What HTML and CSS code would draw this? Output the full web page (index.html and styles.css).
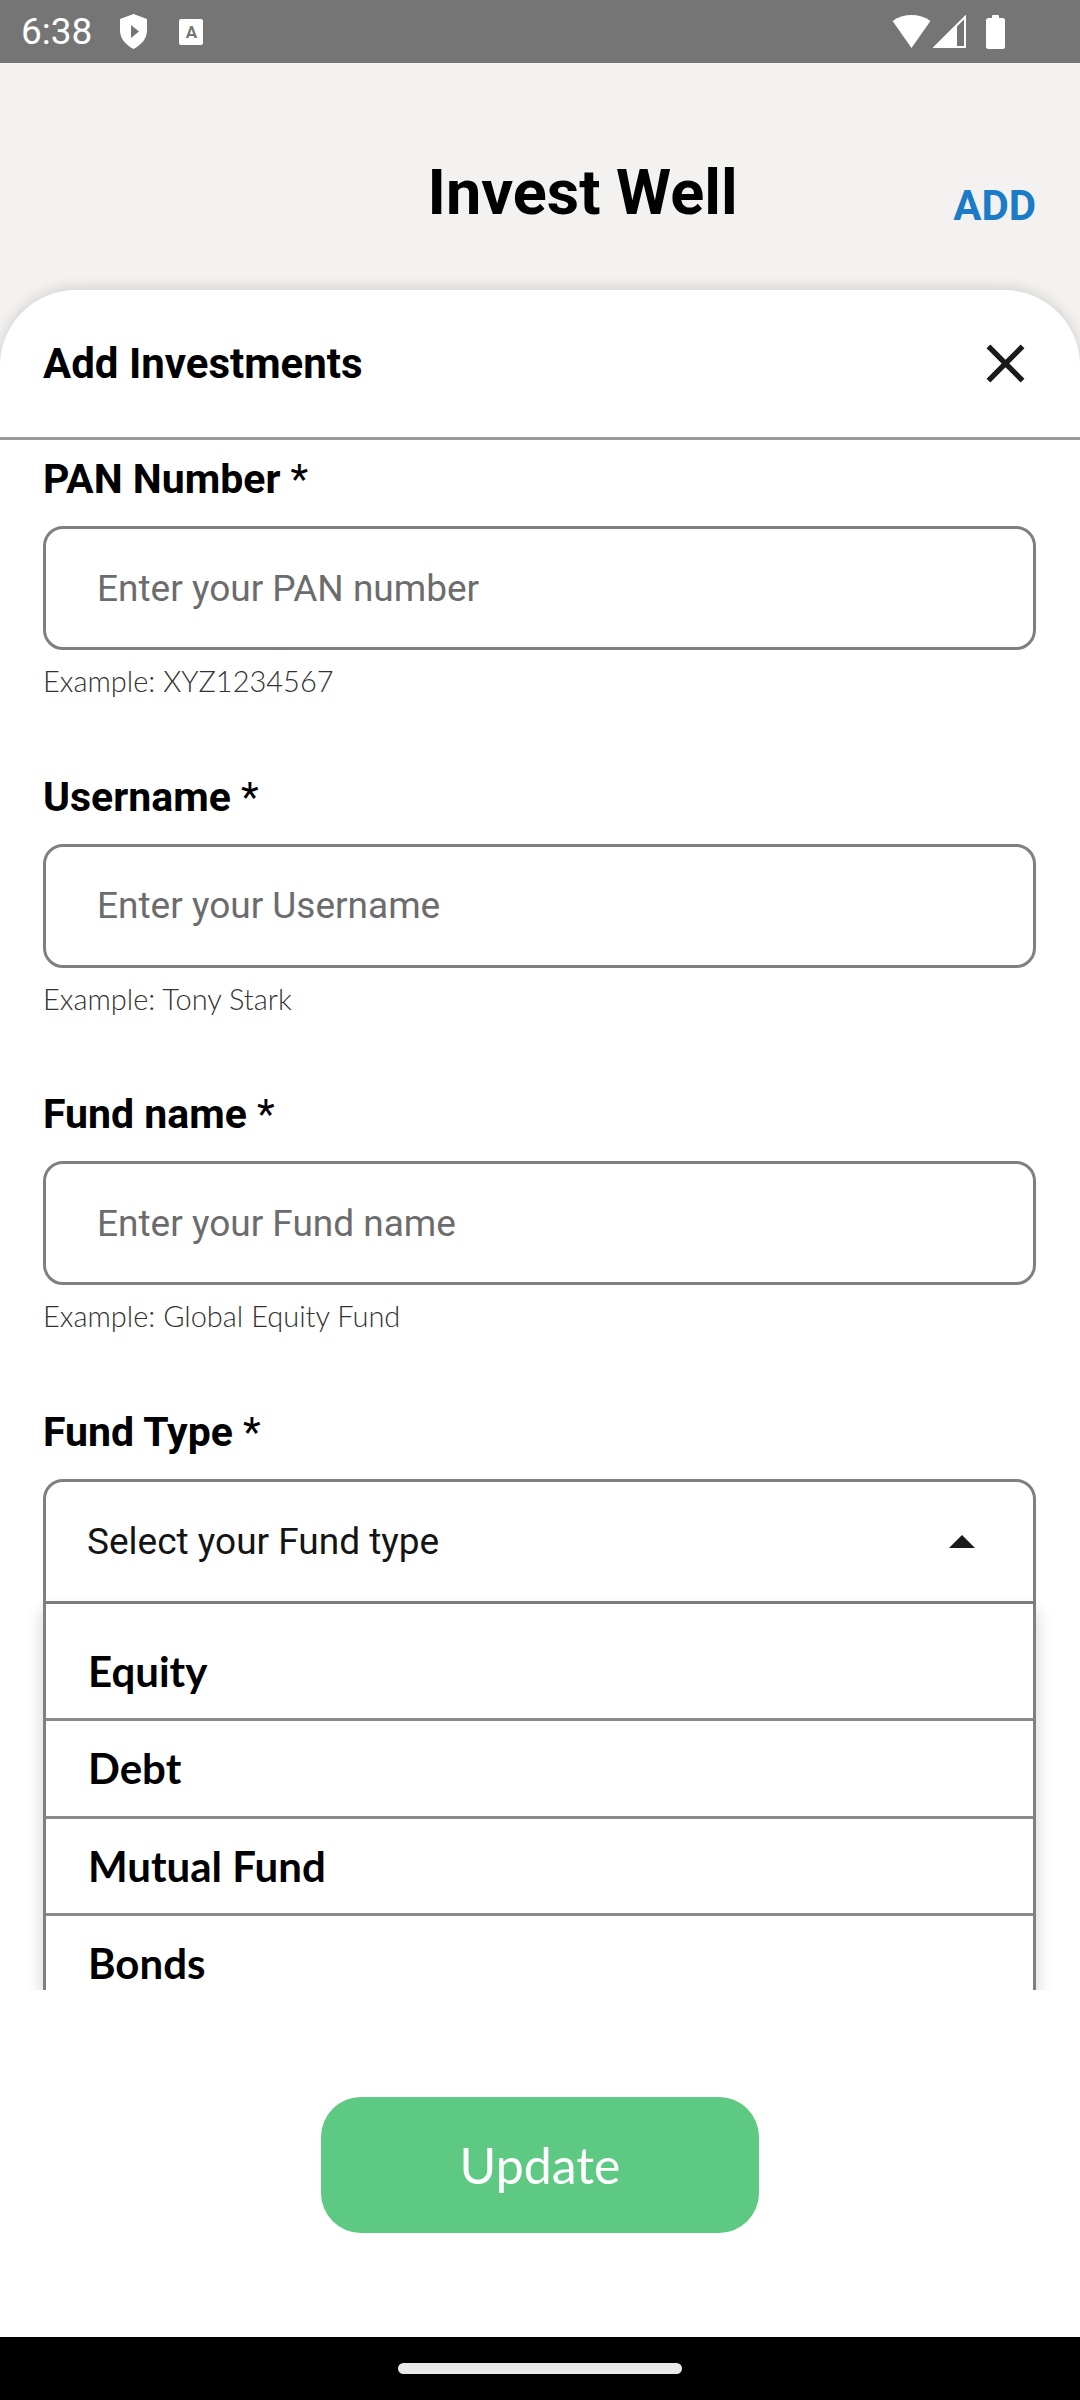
FILE: index.html
```html
<!DOCTYPE html>
<html lang="en">
<head>
<meta charset="utf-8">
<title>Invest Well</title>
<link rel="stylesheet" href="styles.css">
</head>
<body>
<div class="phone">
  <div class="statusbar">
    <div class="sb-left">
      <span class="time">6:38</span>
      <svg class="ic-shield" width="27" height="35" viewBox="0 0 27 35"><path d="M13.5 0 L27 5 V16 C27 25 21 31 13.5 35 C6 31 0 25 0 16 V5 Z" fill="#fff"/><path d="M11 11 L19 17.5 L11 24 Z" fill="#757575"/></svg>
      <span class="ic-a">A</span>
    </div>
    <div class="sb-right">
      <svg width="39" height="33" viewBox="0 0 39 33"><path d="M19.5 33 L0.6 6 A33 33 0 0 1 38.4 6 Z" fill="#fff"/></svg>
      <svg width="33" height="33" viewBox="0 0 33 33"><path d="M32 2 V32 H2 Z" fill="none" stroke="#fff" stroke-width="2"/><path d="M0 33 L24 9 V33 Z" fill="#fff"/></svg>
      <svg class="ic-batt" width="19" height="34" viewBox="0 0 19 34"><rect x="6" y="0" width="7" height="4" rx="1" fill="#fff"/><rect x="0" y="3" width="19" height="31" rx="2.5" fill="#fff"/></svg>
    </div>
  </div>

  <header class="appbar">
    <h1 class="title">Invest Well</h1>
    <span class="add">ADD</span>
  </header>

  <section class="sheet">
    <div class="sheet-head">
      <h2 class="sheet-title">Add Investments</h2>
      <svg class="close" width="65" height="65" viewBox="0 0 24 24"><path d="M19 6.41L17.59 5 12 10.59 6.41 5 5 6.41 10.59 12 5 17.59 6.41 19 12 13.41 17.59 19 19 17.59 13.41 12z" fill="#1a1a1a"/></svg>
    </div>

    <div class="sheet-body">
      <div class="field">
        <div class="label">PAN Number <span class="req">*</span></div>
        <div class="input">Enter your PAN number</div>
        <div class="hint">Example: XYZ1234567</div>
      </div>
      <div class="field">
        <div class="label">Username <span class="req">*</span></div>
        <div class="input">Enter your Username</div>
        <div class="hint">Example: Tony Stark</div>
      </div>
      <div class="field">
        <div class="label">Fund name <span class="req">*</span></div>
        <div class="input">Enter your Fund name</div>
        <div class="hint">Example: Global Equity Fund</div>
      </div>
      <div class="field">
        <div class="label">Fund Type <span class="req">*</span></div>
        <div class="select">
          <span>Select your Fund type</span>
          <svg width="26" height="13" viewBox="0 0 10 5"><path d="M0 5 L5 0 L10 5 Z" fill="#1a1a1a"/></svg>
        </div>
        <div class="options">
          <div class="option first">Equity</div>
          <div class="option">Debt</div>
          <div class="option">Mutual Fund</div>
          <div class="option">Bonds</div>
        </div>
      </div>
    </div>

    <div class="sheet-foot">
      <button class="update">Update</button>
    </div>
  </section>

  <div class="navbar"><span class="pill"></span></div>
</div>
</body>
</html>
```

FILE: styles.css
```css
html, body {
  margin: 0;
  padding: 0;
}
body {
  width: 1080px;
  height: 2400px;
  overflow: hidden;
  background: #f3f2f0;
  font-family: Roboto, "Liberation Sans", sans-serif;
}
.phone {
  width: 1080px;
  height: 2400px;
  display: flex;
  flex-direction: column;
}

/* status bar */
.statusbar {
  height: 63px;
  flex: 0 0 63px;
  background: #757575;
  display: flex;
  align-items: center;
  justify-content: space-between;
  padding: 0 75px 0 21px;
  box-sizing: border-box;
}
.sb-left {
  display: flex;
  align-items: center;
}
.time {
  font: 400 37px/1 Roboto, sans-serif;
  color: #fff;
  margin-right: 28px;
}
.ic-shield {
  margin-right: 32px;
}
.ic-a {
  width: 24px;
  height: 26px;
  background: #fff;
  border-radius: 2px;
  color: #757575;
  font: 700 17px/26px Roboto, sans-serif;
  text-align: center;
}
.sb-right {
  display: flex;
  align-items: center;
  gap: 2px;
}
.ic-batt {
  margin-left: 18px;
}

/* app bar */
.appbar {
  height: 227px;
  flex: 0 0 227px;
  display: flex;
  align-items: flex-start;
  padding: 0 44px 0 212px;
  box-sizing: border-box;
}
.title {
  flex: 1;
  margin: 98px 0 0;
  text-align: center;
  font: 700 63px/63px Roboto, sans-serif;
  color: #000;
}
.add {
  margin-top: 122px;
  font: 700 42px/42px Roboto, sans-serif;
  color: #1b7bc6;
}

/* sheet */
.sheet {
  flex: 1 1 auto;
  min-height: 0;
  background: #fff;
  border-radius: 76px 76px 0 0;
  box-shadow: 0 -2px 14px rgba(0, 0, 0, 0.14);
  display: flex;
  flex-direction: column;
}
.sheet-head {
  height: 150px;
  flex: 0 0 150px;
  box-sizing: border-box;
  border-bottom: 3px solid #9a9a9a;
  display: flex;
  align-items: center;
  justify-content: space-between;
  padding: 0 43px 0 43px;
}
.sheet-title {
  margin: 0;
  font: 700 42px/42px Roboto, sans-serif;
  color: #000;
}
.close {
  margin-right: -1px;
}
.sheet-body {
  flex: 1 1 auto;
  min-height: 0;
  overflow: hidden;
  padding: 15px 44px 0 43px;
}
.field {
  margin-bottom: 73.5px;
}
.label {
  font: 700 41px/48px Roboto, sans-serif;
  color: #000;
  margin-bottom: 23px;
}
.req {
  font-weight: 400;
}
.input {
  height: 124px;
  box-sizing: border-box;
  border: 3px solid #808080;
  border-radius: 20px;
  display: flex;
  align-items: center;
  padding-left: 51px;
  font: 400 37px/1 Roboto, sans-serif;
  color: #6c6c6c;
}
.hint {
  margin-top: 13px;
  font: 300 29px/36px Lato, "Noto Sans", sans-serif;
  color: #333;
}
.select {
  height: 125px;
  box-sizing: border-box;
  border: 3px solid #808080;
  border-radius: 20px 20px 0 0;
  display: flex;
  align-items: center;
  justify-content: space-between;
  padding: 0 58px 0 41px;
  font: 400 37px/1 Roboto, sans-serif;
  color: #141414;
}
.options {
  border: 3px solid #808080;
  border-top: none;
  padding-top: 20px;
  box-shadow: 0 6px 16px rgba(0, 0, 0, 0.18);
}
.option {
  height: 97.5px;
  box-sizing: border-box;
  border-bottom: 3px solid #8a8a8a;
  display: flex;
  align-items: center;
  padding-left: 42px;
  font: 700 42px/1 Lato, "Noto Sans", sans-serif;
  color: #000;
}

/* footer */
.sheet-foot {
  height: 347px;
  flex: 0 0 347px;
  display: flex;
  justify-content: center;
  align-items: flex-start;
}
.update {
  margin-top: 107px;
  width: 438px;
  height: 136px;
  border: none;
  border-radius: 40px;
  background: #5ec982;
  color: #fff;
  font: 400 50px/1 Lato, "Noto Sans", sans-serif;
  padding: 0;
}

/* nav bar */
.navbar {
  height: 63px;
  flex: 0 0 63px;
  background: #000;
  display: flex;
  align-items: center;
  justify-content: center;
}
.pill {
  width: 284px;
  height: 11px;
  border-radius: 6px;
  background: #e9e9e9;
}
```
